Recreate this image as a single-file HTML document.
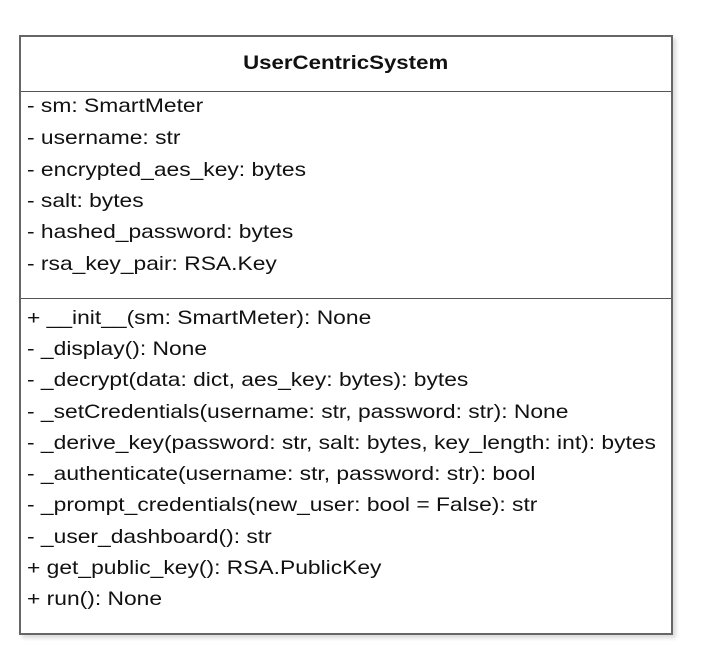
<!DOCTYPE html>
<html><head><style>
body{margin:0;width:716px;height:665px;background:#fff;position:relative;font-family:"Liberation Sans","DejaVu Sans",sans-serif;color:#111}
.box{position:absolute;left:19px;top:35px;width:650px;height:596px;border:2px solid #666;box-shadow:3px 3px 4px rgba(0,0,0,0.15);background:#fff}
.t{position:absolute;left:0;right:0;top:16px;text-align:center;font-weight:bold;font-size:19px}
.t span{display:inline-block;transform:scaleX(1.17)}
.sep{position:absolute;left:0;right:0;height:0;border-top:1.5px solid #555}
.l{position:absolute;left:6px;font-size:19.5px;white-space:nowrap;line-height:22px;transform:scaleX(1.17);transform-origin:0 0}
</style></head><body>
<div class="box">
<div class="t"><span>UserCentricSystem</span></div>
<div class="sep" style="top:54px"></div>
<div class="l" style="top:58px">- sm: SmartMeter</div>
<div class="l" style="top:90px">- username: str</div>
<div class="l" style="top:122px">- encrypted_aes_key: bytes</div>
<div class="l" style="top:153px">- salt: bytes</div>
<div class="l" style="top:184px">- hashed_password: bytes</div>
<div class="l" style="top:216px">- rsa_key_pair: RSA.Key</div>
<div class="sep" style="top:261px"></div>
<div class="l" style="top:270px">+ __init__(sm: SmartMeter): None</div>
<div class="l" style="top:301px">- _display(): None</div>
<div class="l" style="top:332px">- _decrypt(data: dict, aes_key: bytes): bytes</div>
<div class="l" style="top:364px">- _setCredentials(username: str, password: str): None</div>
<div class="l" style="top:395px">- _derive_key(password: str, salt: bytes, key_length: int): bytes</div>
<div class="l" style="top:426px">- _authenticate(username: str, password: str): bool</div>
<div class="l" style="top:457px">- _prompt_credentials(new_user: bool = False): str</div>
<div class="l" style="top:489px">- _user_dashboard(): str</div>
<div class="l" style="top:520px">+ get_public_key(): RSA.PublicKey</div>
<div class="l" style="top:551px">+ run(): None</div>
</div>
</body></html>
